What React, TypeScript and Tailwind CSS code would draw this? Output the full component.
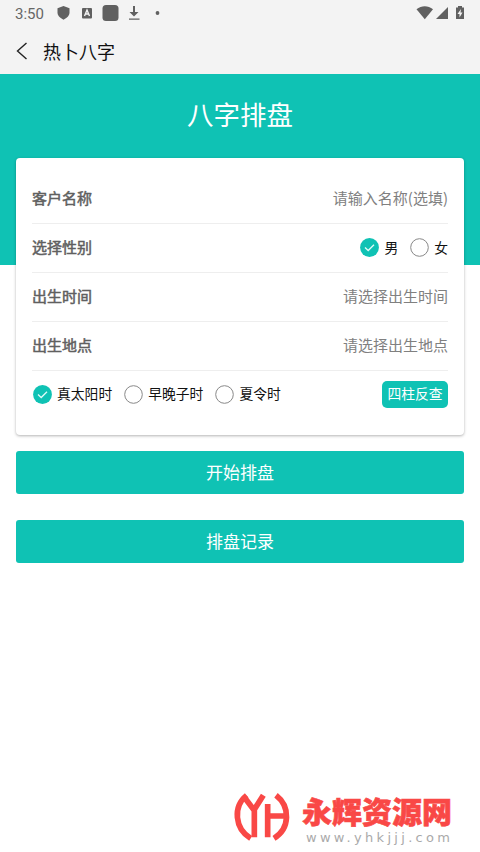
import React, { useState } from "react";

const Radio = ({
  label,
  checked,
  onClick,
}: {
  label: string;
  checked: boolean;
  onClick: () => void;
}) => (
  <button className="flex items-center gap-[5px]" onClick={onClick}>
    <svg className="mt-[2px] h-[19px] w-[19px]" viewBox="0 0 19 19" fill="none">
      {checked ? (
        <>
          <circle cx="9.5" cy="9.5" r="9.4" fill="#0fc2b4" />
          <path d="M5 9.5l3.2 3 5.8-5.8" stroke="#e0fbf8" strokeWidth="1.3" />
        </>
      ) : (
        <circle cx="9.5" cy="9.5" r="8.8" stroke="#888" strokeWidth="1" />
      )}
    </svg>
    <span className="text-[13.8px] leading-5 text-[#111]">{label}</span>
  </button>
);

const Row = ({ label, children }: { label: string; children: React.ReactNode }) => (
  <div className="flex h-[49px] items-center justify-between border-b border-[#eee] pb-[2px]">
    <span className="text-[15px] text-[#606060] [-webkit-text-stroke:0.5px_#606060]">{label}</span>
    {children}
  </div>
);

const StatusBar = () => (
  <div className="flex h-[26px] items-center justify-between pr-[15px] pl-[15px]">
    <div className="flex items-center">
      <span className="w-[42px] pt-[2px] font-[Roboto] text-[15px] text-[#666]">3:50</span>
      <svg className="h-[26px] w-[110px]" viewBox="57 0 110 26" fill="#606060">
        <path d="M63.5 6l6 2.3v4.2c0 3.2-2.7 5.6-6 7.2-3.3-1.6-6-4-6-7.2V8.3z" />
        <rect x="82" y="8" width="10" height="10.5" rx="1" />
        <path d="M84.5 16l2.5-6 2.5 6M85.5 14h3" fill="none" stroke="#f3f3f3" strokeWidth="1.4" />
        <rect x="102.5" y="5" width="16" height="16" rx="3.5" />
        <path d="M133 6h2v6h3.5l-4.5 4.5-4.5-4.5h3.5zM129 18.5h10.5v1.3H129z" />
        <circle cx="157.5" cy="13" r="1.9" />
      </svg>
    </div>
    <svg className="h-[26px] w-[50px]" viewBox="415 0 50 26" fill="#606060">
      <path d="M416.5 9.2c5-4 11.5-4 16.5 0l-8.2 10z" />
      <path d="M448 7v12h-12z" />
      <path d="M458 6h4v1.5h2V19h-8V7.5h2zM461 9l-3.5 5h2v3.5l3-5h-2z" fillRule="evenodd" />
    </svg>
  </div>
);

const Watermark = () => (
  <div className="mt-auto mb-[6px] flex items-start pl-[230px]">
    <svg
      className="h-[58px] w-[64px] shrink-0"
      viewBox="0 0 192 174"
      fill="none"
      stroke="#f94846"
      strokeWidth="17"
    >
      <path d="M50 22C8 56 14 122 62 151" />
      <path d="M138 22C182 56 180 122 132 151" />
      <path d="M43 28L72 66L100 22M73 62V148M113 48V148M113 84H166" />
    </svg>
    <div className="ml-[8px] flex flex-col pt-[7px]">
      <span className="block text-[30px] leading-[31px] font-black text-[#f94846] [-webkit-text-stroke:0.6px_#f94846]">
        永辉资源网
      </span>
      <span className="block pt-[5px] pl-[4px] font-['DejaVu_Sans'] text-[13px] leading-[13px] tracking-[3.3px] whitespace-nowrap text-[#aaa]">
        www.yhkjjj.com
      </span>
    </div>
  </div>
);

const App = () => {
  const [gender, setGender] = useState("男");
  const [timeType, setTimeType] = useState("真太阳时");

  return (
    <div className="flex h-[852px] w-[480px] flex-col bg-white font-['Noto_Sans_CJK_SC',sans-serif]">
      <header className="h-[74px] bg-[#f3f3f3]">
        <StatusBar />
        <div className="flex h-[50px] items-center pl-[16px]">
          <svg className="h-[18px] w-[12px]" viewBox="0 0 12 18" fill="none">
            <path d="M10.5 1L1.5 9l9 8" stroke="#222" strokeWidth="1.4" />
          </svg>
          <h1 className="pl-[15px] text-[18px] text-[#111]">热卜八字</h1>
        </div>
      </header>

      <div className="h-[191px] bg-[#0fc2b4]">
        <h2 className="pt-[21px] text-center text-[26.5px] leading-[38px] text-white">八字排盘</h2>
      </div>

      <main className="-mt-[107px] px-4">
        <div className="h-[277px] rounded bg-white px-4 pt-[17px] shadow-[0_1px_3px_rgba(0,0,0,0.3)]">
          <Row label="客户名称">
            <span className="text-[15px] text-[#808080]">请输入名称(选填)</span>
          </Row>
          <Row label="选择性别">
            <div className="flex gap-[12px] pb-px">
              {["男", "女"].map((g) => (
                <Radio key={g} label={g} checked={gender === g} onClick={() => setGender(g)} />
              ))}
            </div>
          </Row>
          <Row label="出生时间">
            <span className="text-[15px] text-[#808080]">请选择出生时间</span>
          </Row>
          <Row label="出生地点">
            <span className="text-[15px] text-[#808080]">请选择出生地点</span>
          </Row>
          <div className="flex h-[46px] items-center justify-between">
            <div className="flex gap-[12px] pb-[2px] pl-px">
              {["真太阳时", "早晚子时", "夏令时"].map((t) => (
                <Radio key={t} label={t} checked={timeType === t} onClick={() => setTimeType(t)} />
              ))}
            </div>
            <button className="h-[27px] w-[66px] rounded-[5px] bg-[#0fc2b4] pb-[2px] text-[13.8px] text-white">
              四柱反查
            </button>
          </div>
        </div>
        <button className="mt-4 block h-[43px] w-full rounded-[3px] bg-[#0fc2b4] pb-[2px] text-[17px] text-white">
          开始排盘
        </button>
        <button className="mt-[26px] block h-[43px] w-full rounded-[3px] bg-[#0fc2b4] pb-[2px] text-[17px] text-white">
          排盘记录
        </button>
      </main>

      <Watermark />
    </div>
  );
};

export default App;
